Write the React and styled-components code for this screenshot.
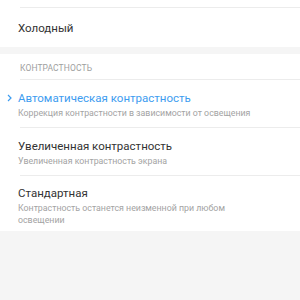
import React from 'react'
import styled, { createGlobalStyle } from 'styled-components'

const Global = createGlobalStyle`
  html, body {
    margin: 0;
    padding: 0;
    background: #f5f5f5;
    font-family: Roboto, "Noto Sans", "Liberation Sans", sans-serif;
  }
`

const Page = styled.div`
  width: 300px;
  height: 300px;
  overflow: hidden;
  background: #f5f5f5;
`

const Group = styled.div`
  background: #fff;
`

const Spacer = styled.div`
  height: 7px;
  background: #f5f5f5;
`

const Row = styled.div`
  position: relative;
  padding: ${p => p.$pad || (p.$last ? '9px 40px 5px 18px' : '10px 40px 8px 18px')};
  min-height: ${p => p.$h || 0}px;
  box-sizing: border-box;
  border-bottom: ${p => (p.$last ? 'none' : '1px solid transparent')};

  &::after {
    content: '';
    display: ${p => (p.$last ? 'none' : 'block')};
    position: absolute;
    left: 20px;
    right: 0;
    bottom: -1px;
    height: 1px;
    background: #ececec;
  }
`

const Title = styled.div`
  font-size: 11.5px;
  line-height: 17px;
  color: ${p => (p.$active ? '#3d9cf0' : '#333')};
`

const Sub = styled.div`
  font-size: 8.8px;
  line-height: 12px;
  color: #a3a3a3;
`

const Header = styled.div`
  position: relative;
  height: 24px;
  padding-left: 20px;
  padding-top: 2px;
  display: flex;
  align-items: center;
  font-size: 8.5px;
  color: #9e9e9e;
  letter-spacing: 0.1px;

  &::after {
    content: '';
    position: absolute;
    left: 20px;
    right: 0;
    bottom: 0;
    height: 1px;
    background: #ececec;
  }
`

const Chevron = styled.svg`
  position: absolute;
  left: 7px;
  top: 14px;
`

const SingleRow = styled.div`
  height: 39px;
  padding-left: 18px;
  display: flex;
  align-items: center;
  font-size: 11.5px;
  color: #333;
`

const items = [
  {
    title: 'Автоматическая контрастность',
    sub: 'Коррекция контрастности в зависимости от освещения',
    active: true,
  },
  {
    title: 'Увеличенная контрастность',
    sub: 'Увеличенная контрастность экрана',
  },
  {
    title: 'Стандартная',
    sub: 'Контрастность останется неизменной при любом освещении',
  },
]

export default function App() {
  return (
    <Page>
      <Global />
      <Group>
        <Row $pad="0" $h={8} />
        <SingleRow>Холодный</SingleRow>
      </Group>
      <Spacer />
      <Group>
        <Header>КОНТРАСТНОСТЬ</Header>
        {items.map((it, i) => (
          <Row key={it.title} $last={i === items.length - 1}>
            {it.active && (
              <Chevron width="5" height="8" viewBox="0 0 5 8">
                <path d="M1 1 L4 4 L1 7" fill="none" stroke="#3d9cf0" strokeWidth="1.2" />
              </Chevron>
            )}
            <Title $active={it.active}>{it.title}</Title>
            <Sub>{it.sub}</Sub>
          </Row>
        ))}
      </Group>
    </Page>
  )
}
